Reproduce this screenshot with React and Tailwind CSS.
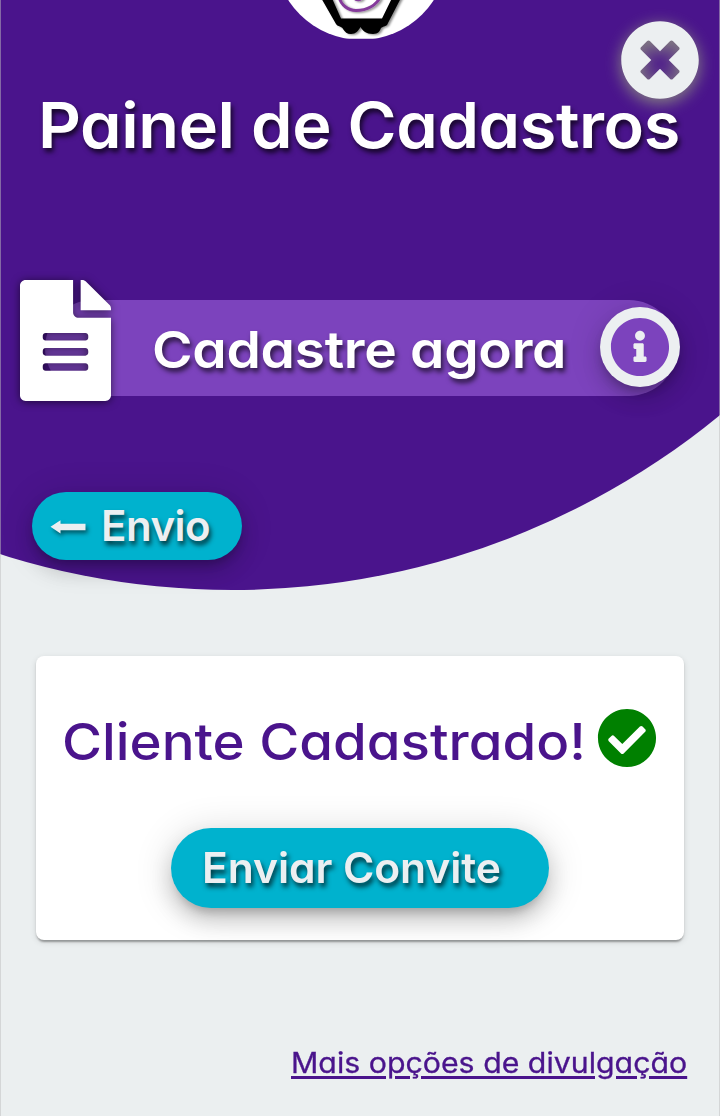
import React from "react";
import { FaTimesCircle, FaInfoCircle, FaCheckCircle, FaFileAlt } from "react-icons/fa";

function Logo() {
  return (
    <svg className="block h-10 w-45" viewBox="0 0 180 40" fill="none">
      <defs>
        <clipPath id="logo-clip">
          <rect width="180" height="38.7" />
        </clipPath>
        <filter id="logo-shade" x="-20%" y="-20%" width="140%" height="140%">
          <feDropShadow dx="2" dy="1" stdDeviation="1.3" floodOpacity="0.45" />
        </filter>
      </defs>
      <g clipPath="url(#logo-clip)">
        <circle cx="91" cy="-46.6" r="86.4" fill="#fff" />
        <g filter="url(#logo-shade)">
          <path d="M50 -4L66 24C68 27 72 26 73 29C75 32 77 34 81 34C86 34 88 31 90.500 27C93 31 96 34 103 34C108 34 110 31 111 28C113 26 117 27 118 23L132 -4H123L112 18.500H71L61 -4Z" fill="#050505" />
          <path d="M69 -3C71 5 78 10.500 86 10.500C97 10.500 107 5 110 -3M84 -2C87 1 91 0 92 -3" stroke="#853b9b" strokeWidth="3" />
        </g>
      </g>
    </svg>
  );
}

function Header() {
  return (
    <header className="flex flex-col">
      <div className="flex h-[97px] justify-end">
        <div className="flex w-full justify-center">
          <Logo />
        </div>
        <button aria-label="Fechar" className="absolute top-[20px] right-[20px] text-[#eceff1]">
          <FaTimesCircle className="block size-20 [filter:drop-shadow(0_4px_8px_#8a8a80)]" />
        </button>
      </div>
      <h1 className="ml-[38px] h-[65px] w-[640px] origin-left scale-x-[1.058] text-[63px] leading-[56px] font-[560] tracking-[-0.4px] whitespace-nowrap text-white [text-shadow:2px_4px_5px_rgba(0,0,0,0.7)]">
        Painel de Cadastros
      </h1>
    </header>
  );
}

function RegisterBar() {
  return (
    <section className="mt-[118px] flex h-[121px] items-start pl-[20px]">
      <FaFileAlt
        preserveAspectRatio="none"
        className="relative z-10 h-[121px] w-[91px] shrink-0 text-white [filter:drop-shadow(0_1px_4px_rgba(0,0,0,0.6))]"
      />
      <div className="mt-[20px] -ml-[66px] flex h-24 w-[632px] items-center rounded-[48px] bg-[#7c43bd] pl-[107px]">
        <span className="mt-[4px] w-[448px] shrink-0 origin-left scale-x-[1.082] text-[51px] leading-[60px] font-[560] tracking-[-0.3px] whitespace-nowrap text-white [text-shadow:2px_4px_5px_rgba(0,0,0,0.65)]">
          Cadastre agora
        </span>
        <button
          aria-label="Informações"
          className="relative -mt-[2px] flex size-20 shrink-0 items-center justify-center rounded-full bg-[#eceff1] text-[#7c43bd] shadow-[0_6px_10px_-2px_rgba(0,0,0,0.2),0_12px_20px_rgba(0,0,0,0.14),0_2px_36px_rgba(0,0,0,0.12)]"
        >
          <FaInfoCircle className="size-[60px]" />
        </button>
      </div>
    </section>
  );
}

function BackButton() {
  return (
    <button className="mt-[91px] ml-[32px] flex h-[68px] w-[210px] items-center rounded-full bg-[#00b2ce] pl-[18px] text-[#eceff1] shadow-[0_6px_10px_-2px_rgba(0,0,0,0.2),0_12px_20px_rgba(0,0,0,0.14),0_2px_36px_rgba(0,0,0,0.12)]">
      <svg className="mt-[1px] h-[14px] w-[36px] overflow-visible [filter:drop-shadow(2px_3px_2px_rgba(0,0,0,0.5))]" viewBox="0 0 36 14" fill="currentColor">
        <path d="M0.500 6.700L10.500 0.200V3.800H35.500V10.200H10.500V13.500Z" />
      </svg>
      <span className="ml-[15px] text-[42px] leading-[52px] font-[560] tracking-[-0.5px] [text-shadow:2px_4px_5px_rgba(0,0,0,0.7)]">Envio</span>
    </button>
  );
}

function SuccessCard() {
  return (
    <section className="mx-auto mt-24 flex h-[284px] w-[648px] flex-col items-center rounded-lg bg-white shadow-[0_4px_2px_-2px_rgba(0,0,0,0.2),0_2px_2px_rgba(0,0,0,0.14),0_2px_6px_rgba(0,0,0,0.12)]">
      <div className="flex w-full pt-[52px] pl-[26px]">
        <h2 className="mt-[2px] w-[535px] shrink-0 origin-left scale-x-[1.071] text-[51px] leading-[64px] font-medium whitespace-nowrap text-[#4a148c]">Cliente Cadastrado!</h2>
        <FaCheckCircle className="relative size-[60px] text-[#008000]" />
      </div>
      <button className="mt-[54px] h-20 w-[378px] rounded-full bg-[#00b2ce] pl-[31px] text-left text-[42px] leading-[80px] font-[560] whitespace-nowrap text-[#eceff1] shadow-[0_10px_10px_-6px_rgba(0,0,0,0.2),0_12px_20px_2px_rgba(0,0,0,0.14),0_4px_36px_4px_rgba(0,0,0,0.12)] [text-shadow:2px_4px_5px_rgba(0,0,0,0.7)]">
        <span className="inline-block origin-left scale-x-[1.015] tracking-[-0.1px]">Enviar Convite</span>
      </button>
    </section>
  );
}

export default function App() {
  return (
    <main className="relative isolate flex h-[1116px] w-[720px] flex-col overflow-hidden bg-[#ebeff0] font-['Inter',sans-serif] [font-feature-settings:'cv11'_1]">
      <div className="absolute -top-[946px] -left-[536px] -z-10 size-[1536px] rounded-full bg-[#4a148c]" />
      <div className="pointer-events-none absolute inset-0 z-20 border-x border-[#bdbdbd]/50" />
      <Header />
      <RegisterBar />
      <BackButton />
      <SuccessCard />
      <a href="#divulgacao" className="mt-[103px] ml-[291px] block w-[366px] origin-left scale-x-[1.082] text-[28px] leading-[40px] font-[430] whitespace-nowrap text-[#4a148c] underline decoration-[2.5px] underline-offset-[3px] [-webkit-text-stroke:0.3px_#4a148c]">
        Mais opções de divulgação
      </a>
    </main>
  );
}
